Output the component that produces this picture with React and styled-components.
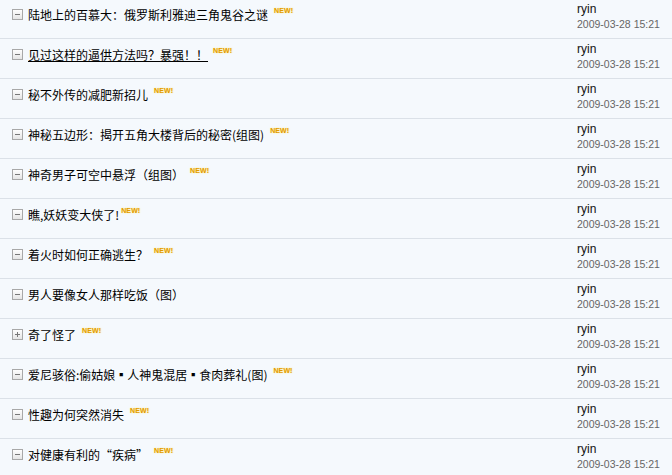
import React from "react";
import styled, { createGlobalStyle } from "styled-components";

const Global = createGlobalStyle`
  html, body { margin: 0; padding: 0; background: #f5f9fd; }
  body { font-family: "Noto Sans CJK SC", "Liberation Sans", sans-serif; overflow: hidden; }
`;

const List = styled.ul`
  list-style: none;
  margin: -1px 0 0 0;
  padding: 0;
  width: 672px;
`;

const Row = styled.li`
  display: flex;
  align-items: flex-start;
  height: 39px;
  border-bottom: 1px solid #dbe1e8;
`;

const TitleCell = styled.div`
  flex: 1;
  display: flex;
  align-items: flex-start;
  padding: 10px 0 0 12px;
  min-width: 0;
`;

const Toggle = styled.svg`
  flex: none;
  width: 11px;
  height: 11px;
  margin-right: 5px;
`;

const Title = styled.a`
  font-family: "Noto Sans CJK SC", sans-serif;
  font-size: 12px;
  line-height: 14px;
  color: #000;
  text-decoration: ${(p) => (p.$active ? "underline" : "none")};
  white-space: nowrap;
  margin-top: -1px;
`;

const NewBadge = styled.span`
  font-family: "Liberation Sans", Arial, sans-serif;
  font-weight: bold;
  font-size: 7px;
  line-height: 7px;
  color: #e29a00;
  text-shadow: 0 0 2px #fff0a0, 0 0 1px #ffe9a0;
  margin-left: ${(p) => p.$gap}px;
  margin-top: -2px;
  letter-spacing: 0.1px;
`;

const MetaCell = styled.div`
  flex: none;
  width: 95px;
  padding-top: 4px;
  font-family: "Liberation Sans", Arial, sans-serif;
`;

const Author = styled.div`
  font-size: 12px;
  line-height: 13px;
  color: #111;
`;

const Time = styled.div`
  font-size: 10.5px;
  line-height: 12px;
  margin-top: 2px;
  color: #666;
`;

function ToggleIcon({ plus }) {
  return (
    <Toggle viewBox="0 0 11 11">
      <defs>
        <linearGradient id="tg" x1="0" y1="0" x2="0" y2="1">
          <stop offset="0" stopColor="#ffffff" />
          <stop offset="1" stopColor="#e4e4e4" />
        </linearGradient>
      </defs>
      <rect x="0.5" y="0.5" width="10" height="10" fill="url(#tg)" stroke="#a8a8a8" />
      <line x1="3" y1="5.5" x2="8" y2="5.5" stroke="#777" />
      {plus && <line x1="5.5" y1="3" x2="5.5" y2="8" stroke="#777" />}
    </Toggle>
  );
}

const items = [
  { t: "陆地上的百慕大：俄罗斯利雅迪三角鬼谷之谜", n: true, g: 6 },
  { t: "见过这样的逼供方法吗？暴强！！", n: true, g: 5, a: true },
  { t: "秘不外传的减肥新招儿", n: true, g: 6 },
  { t: "神秘五边形：揭开五角大楼背后的秘密(组图)", n: true, g: 6 },
  { t: "神奇男子可空中悬浮（组图）", n: true, g: 6 },
  { t: "瞧,妖妖变大侠了!", n: true, g: 2 },
  { t: "着火时如何正确逃生？", n: true, g: 6 },
  { t: "男人要像女人那样吃饭（图）", n: false },
  { t: "奇了怪了", n: true, g: 6, plus: true },
  { t: "爱尼骇俗:偷姑娘▪人神鬼混居▪食肉葬礼(图)", n: true, g: 6 },
  { t: "性趣为何突然消失", n: true, g: 6 },
  { t: "对健康有利的“疾病”", n: true, g: 6 },
];

export default function App() {
  return (
    <>
      <Global />
      <List>
        {items.map((it, i) => (
          <Row key={i}>
            <TitleCell>
              <ToggleIcon plus={it.plus} />
              <Title href="#" $active={it.a}>{it.t}</Title>
              {it.n && <NewBadge $gap={it.g}>NEW!</NewBadge>}
            </TitleCell>
            <MetaCell>
              <Author>ryin</Author>
              <Time>2009-03-28 15:21</Time>
            </MetaCell>
          </Row>
        ))}
      </List>
    </>
  );
}
